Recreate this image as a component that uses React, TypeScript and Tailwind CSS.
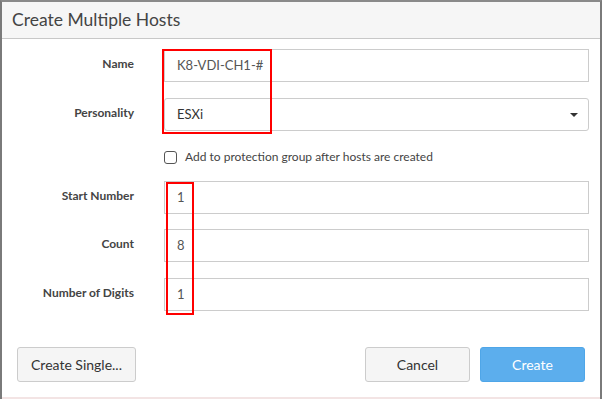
import React from "react";

function Field({ label, children, className = "" }: { label: string; children: React.ReactNode; className?: string }) {
  return (
    <div className={"flex items-center " + className}>
      <div className="w-[132px] shrink-0 pb-[3px] text-right text-[12px] font-bold text-[#444]">{label}</div>
      <div className="ml-[30px] flex-1">{children}</div>
    </div>
  );
}

function TextBox({ value }: { value: string }) {
  return (
    <div className="flex h-[33px] items-center border border-[#ccc] bg-white pl-[12px] text-[13px] text-[#555]">
      {value}
    </div>
  );
}

export default function App() {
  return (
    <div
      className="relative flex h-[399px] w-[602px] flex-col overflow-hidden border-x-2 border-t-2 border-x-[#7a7a7a] border-t-[#8a8a8a] bg-white"
      style={{ fontFamily: "Lato, 'Open Sans', sans-serif" }}
    >
      <div className="flex h-[37px] shrink-0 items-center border-b border-[#c8c8c8] bg-[#f6f6f6] pl-[10px] text-[17.5px] text-[#444]">
        Create Multiple Hosts
      </div>
      <div className="flex flex-1 flex-col pr-[11px] pt-[10px]">
        <Field label="Name">
          <TextBox value="K8-VDI-CH1-#" />
        </Field>
        <Field label="Personality" className="mt-[16px]">
          <div className="relative flex h-[33px] items-center rounded-[3px] border border-[#ccc] bg-white pl-[12px] text-[13px] text-[#333]">
            ESXi
            <span className="absolute right-[10px] top-[14px] h-0 w-0 border-x-[4px] border-t-[4px] border-x-transparent border-t-[#333]" />
          </div>
        </Field>
        <div className="ml-[162px] mt-[16px] flex h-[20px] items-center">
          <span className="h-[13px] w-[13px] rounded-[3px] border border-[#555] bg-white" />
          <span className="ml-[8px] text-[12px] text-[#444]">Add to protection group after hosts are created</span>
        </div>
        <Field label="Start Number" className="mt-[14px]">
          <TextBox value="1" />
        </Field>
        <Field label="Count" className="mt-[15px]">
          <TextBox value="8" />
        </Field>
        <Field label="Number of Digits" className="mt-[16px]">
          <TextBox value="1" />
        </Field>
        <div className="mt-[36px] flex items-center pl-[15px] pr-[4px]">
          <button className="h-[35px] w-[119px] rounded-[3px] border border-[#ccc] bg-[#f5f5f5] text-[14px] text-[#333]">
            Create Single...
          </button>
          <div className="flex-1" />
          <button className="h-[35px] w-[105px] rounded-[3px] border border-[#ccc] bg-[#f5f5f5] text-[14px] text-[#333]">
            Cancel
          </button>
          <button className="ml-[10px] h-[35px] w-[105px] rounded-[3px] border border-[#4fa6e8] bg-[#5caeed] text-[14px] text-white">
            Create
          </button>
        </div>
      </div>
      <div className="absolute bottom-0 left-0 h-[2px] w-full bg-[#f3e4e4]" />
      <div className="pointer-events-none absolute left-[160px] top-[47px] h-[85px] w-[110px] border-2 border-[#ff0000]" />
      <div className="pointer-events-none absolute left-[164px] top-[180px] h-[133px] w-[28px] border-2 border-[#ff0000]" />
    </div>
  );
}
